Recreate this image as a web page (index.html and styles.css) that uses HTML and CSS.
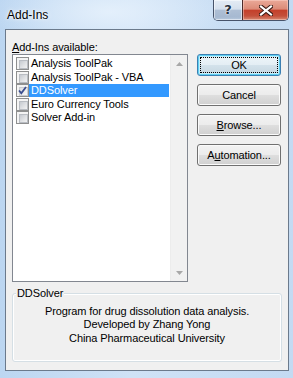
FILE: index.html
```html
<!DOCTYPE html>
<html>
<head>
<meta charset="utf-8">
<link rel="stylesheet" href="styles.css">
</head>
<body>
<div class="window">
  <div class="titlebar">
    <span class="title">Add-Ins</span>
    <div class="caption">
      <div class="cbtn help"><span class="qmark">?</span></div>
      <div class="cbtn close">
        <svg width="14" height="11" viewBox="0 0 14 11"><path d="M2 1.5 L12 9.5 M12 1.5 L2 9.5" stroke="#3a1a14" stroke-width="4.2" stroke-linecap="square" fill="none"/><path d="M2 1.5 L12 9.5 M12 1.5 L2 9.5" stroke="#ffffff" stroke-width="2.2" stroke-linecap="square" fill="none"/></svg>
      </div>
    </div>
  </div>
  <div class="client">
    <div class="main">
      <div class="left">
        <div class="label"><u>A</u>dd-Ins available:</div>
        <div class="listbox">
          <div class="items">
            <div class="item"><span class="cb"></span><span class="txt">Analysis ToolPak</span></div>
            <div class="item"><span class="cb"></span><span class="txt">Analysis ToolPak - VBA</span></div>
            <div class="item sel"><span class="cb checked"><svg width="13" height="13" viewBox="0 0 13 13"><path d="M3 6.5 L5.3 9.2 L10 3" stroke="#3c4f8f" stroke-width="1.8" fill="none"/></svg></span><span class="txt">DDSolver</span></div>
            <div class="item"><span class="cb"></span><span class="txt">Euro Currency Tools</span></div>
            <div class="item"><span class="cb"></span><span class="txt">Solver Add-in</span></div>
          </div>
          <div class="vscroll">
            <div class="arr"><svg width="7" height="4" viewBox="0 0 7 4"><polygon points="0,4 7,4 3.5,0" fill="#a8a8a8"/></svg></div>
            <div class="arr"><svg width="7" height="4" viewBox="0 0 7 4"><polygon points="0,0 7,0 3.5,4" fill="#a8a8a8"/></svg></div>
          </div>
        </div>
      </div>
      <div class="buttons">
        <div class="btn default"><span class="focus">OK</span></div>
        <div class="btn">Cancel</div>
        <div class="btn"><span><u>B</u>rowse...</span></div>
        <div class="btn"><span>A<u>u</u>tomation...</span></div>
      </div>
    </div>
    <div class="group">
      <span class="legend">DDSolver</span>
      <p>Program for drug dissolution data analysis.<br>Developed by Zhang Yong<br>China Pharmaceutical University</p>
    </div>
  </div>
</div>
</body>
</html>
```
FILE: styles.css
```css
html, body {
  margin: 0;
  padding: 0;
}
body {
  width: 293px;
  height: 378px;
  overflow: hidden;
  font-family: "Liberation Sans", Arial, sans-serif;
  font-size: 11px;
  letter-spacing: -0.1px;
  color: #000;
}
.window {
  width: 293px;
  height: 378px;
  background:
    radial-gradient(ellipse 120px 40px at 110px 12px, rgba(230,241,252,0.9), rgba(230,241,252,0) 100%),
    linear-gradient(90deg, #bcd6f1 0%, #cfe2f6 45%, #c3daf2 100%);
  display: flex;
  flex-direction: column;
}
.titlebar {
  height: 29px;
  display: flex;
  align-items: flex-start;
  flex: none;
}
.title {
  font-size: 12px;
  line-height: 14px;
  letter-spacing: 0;
  padding: 8px 0 0 7px;
  text-shadow: 0 0 5px rgba(255,255,255,0.95), 0 0 2px rgba(255,255,255,0.9);
}
.caption {
  margin-left: auto;
  margin-right: 4px;
  display: flex;
  height: 20px;
  border: 1px solid #47536a;
  border-top: none;
  border-radius: 0 0 5px 5px;
  overflow: hidden;
}
.cbtn {
  display: flex;
  align-items: center;
  justify-content: center;
}
.help {
  width: 28px;
  background: linear-gradient(#e4ecf5 0%, #d5e0ed 45%, #aebfd5 52%, #a6b9d1 85%, #b9cade 100%);
  box-shadow: inset 0 0 0 1px rgba(255,255,255,0.5);
}
.qmark {
  font-family: "DejaVu Sans", sans-serif;
  font-weight: bold;
  font-size: 13px;
  line-height: 14px;
  color: #27313f;
  text-shadow: 0 0 2px #fff, 0 0 1px #fff;
  margin-top: -1px;
}
.close {
  width: 45px;
  border-left: 1px solid #4b2a2a;
  background: linear-gradient(#eaa998 0%, #dc8b78 45%, #c4402b 52%, #c4503b 80%, #d88a74 100%);
  box-shadow: inset 0 0 0 1px rgba(255,220,210,0.45);
}
.close svg {
  display: block;
  margin-top: 1px;
}
.client {
  margin: 0 4px 0 5px;
  height: 342px;
  box-sizing: border-box;
  border: 1px solid #6b7a8c;
  background: #f0f0f0;
  padding: 10px 6px 8px 6px;
  display: flex;
  flex-direction: column;
}
.main {
  display: flex;
  gap: 9px;
}
.left {
  width: 176px;
}
.label {
  height: 14px;
  line-height: 14px;
}
.listbox {
  height: 228px;
  box-sizing: border-box;
  border: 1px solid #828790;
  background: #fff;
  display: flex;
}
.items {
  flex: 1;
  padding: 2px 1px 0 3px;
}
.item {
  display: flex;
  align-items: center;
  height: 13.5px;
}
.cb {
  flex: none;
  width: 13px;
  height: 13px;
  box-sizing: border-box;
  border: 1px solid #8e8f8f;
  background: #f4f4f4;
  padding: 2px;
  position: relative;
}
.cb::before {
  content: "";
  display: block;
  width: 7px;
  height: 7px;
  border: 1px solid #b9bdc3;
  background: linear-gradient(135deg, #c6cad0 0%, #dfe1e4 55%, #f2f2f2 100%);
}
.cb.checked::before {
  border-color: #c9ccd1;
  background: linear-gradient(135deg, #dcdee1 0%, #eeeeef 60%, #f7f7f7 100%);
}
.cb svg {
  position: absolute;
  left: -1px;
  top: -1px;
}
.txt {
  height: 13px;
  line-height: 13px;
  padding-left: 2px;
  white-space: nowrap;
}
.sel .txt {
  flex: 1;
  background: #3399ff;
  color: #fff;
}
.vscroll {
  width: 17px;
  background: #f1f1f1;
  border-left: 1px solid #ececec;
  box-sizing: border-box;
  display: flex;
  flex-direction: column;
  justify-content: space-between;
}
.arr {
  height: 17px;
  display: flex;
  align-items: center;
  justify-content: center;
}
.arr svg {
  display: block;
}
.buttons {
  display: flex;
  flex-direction: column;
  gap: 8px;
  margin-top: 14px;
  width: 84px;
}
.btn {
  height: 22px;
  box-sizing: border-box;
  border: 1px solid #707070;
  border-radius: 3px;
  background: linear-gradient(#f3f3f3 0%, #ececec 48%, #dedede 52%, #d0d0d0 100%);
  box-shadow: inset 0 0 0 1px #fbfbfb;
  display: flex;
  align-items: center;
  justify-content: center;
  line-height: 13px;
}
.btn.default {
  border-color: #3c7fb1;
  box-shadow: inset 0 0 0 1px #5fd0f2, inset 0 0 0 2px #c6ecf9;
  background: linear-gradient(#eef6fa 0%, #e4eef4 48%, #d3e2eb 52%, #c6d6e0 100%);
  padding: 2px;
  align-items: stretch;
}
.focus {
  flex: 1;
  border: 1px dotted #000;
  display: flex;
  align-items: center;
  justify-content: center;
}
.group {
  position: relative;
  margin-top: 11px;
  width: 270px;
  height: 69px;
  box-sizing: border-box;
  border: 1px solid #d5dfe5;
  border-radius: 3px;
  box-shadow: inset 0 0 0 1px #fff;
  padding-top: 11px;
  text-align: center;
}
.legend {
  position: absolute;
  top: -8px;
  left: 3px;
  padding: 0 1px;
  line-height: 14px;
  background: #f0f0f0;
}
.group p {
  margin: 0;
  line-height: 13.4px;
}
```
